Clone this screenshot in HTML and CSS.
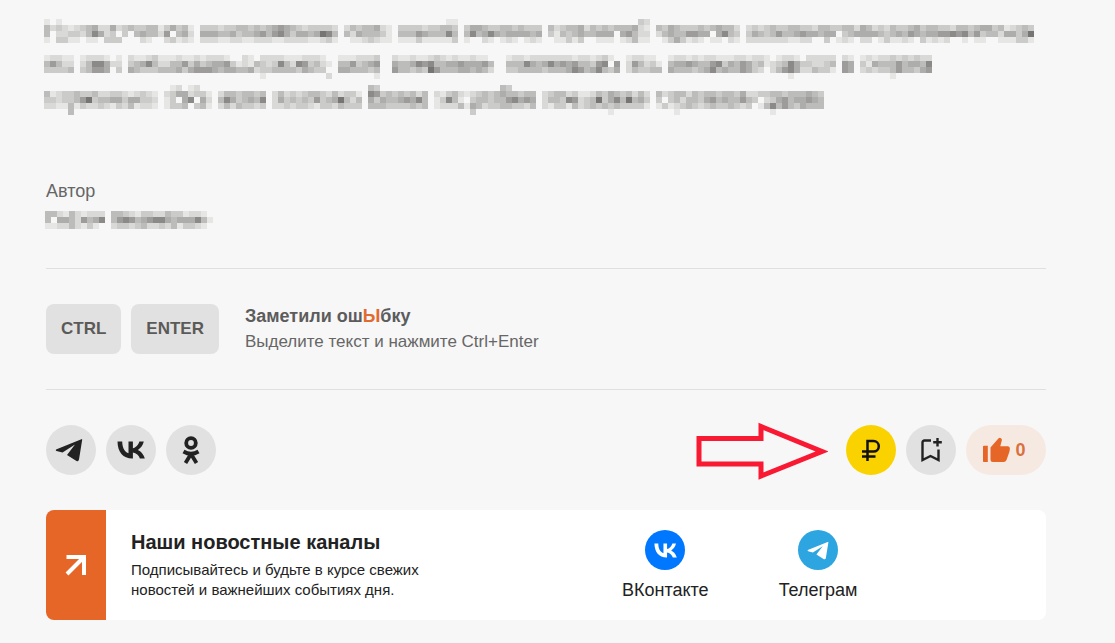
FILE: index.html
```html
<!DOCTYPE html>
<html lang="ru">
<head>
  <meta charset="UTF-8" />
  <meta name="viewport" content="width=device-width, initial-scale=1.0" />
  <title>Новости</title>
  <link rel="stylesheet" href="styles.css">
</head>
<body>
  <svg class="sprite" aria-hidden="true">
    <symbol id="plane" viewBox="0 0 28 24">
      <path d="M27 1 L1 11.5 Q.3 12.7 1.5 13 L7.5 14.5 L20 6.5 L12 17 L21.5 23 Q23.5 24 24 21.5 L27.2 1.8 Z" />
    </symbol>
    <symbol id="vk" viewBox="0 0 28 18">
      <path d="M15.3 17.5 C6 17.5 .7 11.1 .5 .5 H5.2 C5.3 8.3 8.8 11.6 11.5 12.2 V.5 H15.9 V7.2 C18.6 6.9 21.4 3.9 22.4 .5 H26.8 C26.1 4.6 23.1 7.6 20.9 8.9 C23.1 9.9 26.5 12.6 27.8 17.5 H22.9 C21.9 14.3 19.3 11.8 15.9 11.4 V17.5 Z" />
    </symbol>
  </svg>

  <main class="page">
    <div class="redacted" id="article"></div>

    <section class="author">
      <div>Автор</div>
      <div class="redacted" id="author"></div>
    </section>

    <section class="mistake">
      <kbd class="key">CTRL</kbd>
      <kbd class="key">ENTER</kbd>
      <div class="mistake-text">
        <strong>Заметили ош<span class="accent">Ы</span>бку</strong>
        <div>Выделите текст и нажмите Ctrl+Enter</div>
      </div>
    </section>

    <section class="toolbar">
      <button class="round" aria-label="Телеграм">
        <svg class="icon-plane" width="28" height="24"><use href="#plane" /></svg>
      </button>
      <button class="round" aria-label="ВКонтакте">
        <svg class="icon-vk" width="28" height="18"><use href="#vk" /></svg>
      </button>
      <button class="round" aria-label="Одноклассники">
        <svg width="18" height="28" viewBox="0 0 18 28" fill="none" stroke="currentColor" stroke-width="3.8">
          <circle cx="9" cy="7" r="4.8" />
          <path d="M1.5 15.5 Q9 20 16.5 15.5 M9 18 L3.5 27 M9 18 L14.5 27" />
        </svg>
      </button>

      <svg class="pointer" width="132" height="60" viewBox="0 0 132 60">
        <path d="M3 18.5 H65 V6.500 L126 31.500 L65 56 V44 H3 Z" />
      </svg>

      <button class="round round-yellow" aria-label="Поддержать">
        <svg width="20" height="24" viewBox="0 0 20 24" fill="none" stroke="currentColor" stroke-width="2.5">
          <path d="M6.5 23 V3 H12.5 A5.3 5.3 0 0 1 12.5 13.600 H1 M1 18.5 H14.5" />
        </svg>
      </button>
      <button class="round" aria-label="В закладки">
        <svg width="22" height="26" viewBox="0 0 22 26" fill="none" stroke="currentColor" stroke-width="2.4">
          <path d="M11 3.5 H4.5 Q2.5 3.5 2.5 5.5 V23 L10.5 19 L18.5 23 V12.5 M17.5 1 V9.5 M13.2 5.3 H21.8" />
        </svg>
      </button>
      <button class="like">
        <svg width="28" height="26" viewBox="0 0 28 26">
          <path d="M1 9.5 Q1 8.8 1.8 8.8 H5.8 V25 H1.8 Q1 25 1 24.2 Z M8.5 10.5 L16.6 1.3 Q17.8 0 19 1.3 Q20.2 2.2 19.8 3.5 L18.3 9.2 H26 Q28 9.4 27.9 11.5 L27.5 14.5 L24.5 23 Q23.8 25 21.5 25 H11 Q8.5 25 8.5 22.5 Z" />
        </svg>
        <span>0</span>
      </button>
    </section>

    <section class="channels">
      <div class="channels-mark">
        <svg width="22" height="22" viewBox="0 0 22 22">
          <path d="M1.5 3 H19 V21 M18.5 3.5 L2 20" />
        </svg>
      </div>
      <div class="channels-text">
        <h2>Наши новостные каналы</h2>
        <p>Подписывайтесь и будьте в курсе свежих<br />новостей и важнейших событиях дня.</p>
      </div>
      <nav class="channels-links">
        <a href="#">
          <span class="logo logo-vk"><svg width="23" height="15"><use href="#vk" /></svg></span>
          ВКонтакте
        </a>
        <a href="#">
          <span class="logo logo-tg"><svg width="22" height="19"><use href="#plane" /></svg></span>
          Телеграм
        </a>
      </nav>
    </section>
  </main>

  <script src="script.js"></script>
</body>
</html>
```

FILE: styles.css
```css
body {
  margin: 0;
  background-color: #f7f7f7;
  color: #222;
  font-family: "Liberation Sans", Arial, sans-serif;
  font-size: 18px;
}

button {
  border: none;
  padding: 0;
  font-family: inherit;
  cursor: pointer;
}

.sprite {
  position: absolute;
  width: 0;
  height: 0;
}

.page {
  margin: 0 69px 0 46px;
  padding: 19px 0 23px;
}

.redacted {
  margin-left: -2px;
}

.redacted svg {
  display: block;
}

.author {
  margin-top: 64px;
  padding-bottom: 39px;
  border-bottom: 1px solid #e0e0e0;
  color: #666;
  line-height: 24px;
}

.author .redacted {
  margin-top: 8px;
  margin-left: -1px;
}

.mistake {
  display: flex;
  align-items: center;
  gap: 10px;
  padding: 35px 0;
  border-bottom: 1px solid #e0e0e0;
}

.key {
  padding: 0 15px;
  border-radius: 8px;
  background-color: #e1e1e1;
  color: #5c5a58;
  font-family: inherit;
  font-size: 17px;
  font-weight: bold;
  line-height: 50px;
}

.mistake-text {
  margin-left: 16px;
  color: #666;
  font-size: 17px;
  line-height: 25px;
}

.mistake-text strong {
  color: #5c5c5c;
  font-size: 18px;
}

.mistake-text .accent {
  color: #e06a30;
}

.toolbar {
  display: flex;
  align-items: center;
  gap: 10px;
  height: 50px;
  margin: 35px 0;
}

.round {
  display: flex;
  align-items: center;
  justify-content: center;
  width: 50px;
  height: 50px;
  border-radius: 50%;
  background-color: #e1e1e1;
  color: #222;
}

.round-yellow {
  background-color: #f9d200;
  color: #111;
}

.icon-plane,
.icon-vk {
  fill: currentColor;
}

.icon-plane {
  margin-right: 4px;
}

.pointer {
  margin-left: auto;
  margin-right: 8px;
  fill: none;
  stroke: #fa1932;
  stroke-width: 5;
}

.like {
  display: flex;
  align-items: center;
  justify-content: center;
  gap: 5px;
  width: 80px;
  height: 50px;
  padding-right: 4px;
  border-radius: 25px;
  background-color: #f6e9e2;
  color: #d9703f;
  font-size: 18px;
  font-weight: bold;
}

.like svg {
  fill: #e56627;
}

.channels {
  display: flex;
  min-height: 110px;
  border-radius: 8px;
  background-color: #fff;
  overflow: hidden;
}

.channels-mark {
  display: flex;
  flex: 0 0 60px;
  align-items: center;
  justify-content: center;
  background-color: #e56627;
}

.channels-mark path {
  fill: none;
  stroke: #fff;
  stroke-width: 4;
}

.channels-text {
  flex: 0 1 491px;
  padding: 20px 0 0 25px;
}

.channels-text h2 {
  margin: 0 0 6px;
  font-size: 20px;
  line-height: 24px;
}

.channels-text p {
  margin: 0;
  font-size: 15px;
  line-height: 20px;
}

.channels-links {
  display: flex;
  gap: 70px;
  padding-top: 20px;
}

.channels-links a {
  display: flex;
  flex-direction: column;
  align-items: center;
  gap: 8px;
  color: #222;
  line-height: 24px;
  text-decoration: none;
}

.logo {
  display: flex;
  align-items: center;
  justify-content: center;
  width: 40px;
  height: 40px;
  border-radius: 50%;
}

.logo svg {
  fill: #fff;
}

.logo-vk {
  background-color: #0077ff;
}

.logo-tg {
  background-color: #2ca5e0;
}
```

FILE: script.js
```javascript
// Hidden text is drawn as a mosaic: one digit per 6px block, 0 is empty, 8 is darkest.
const BLOCK = 6;
const SHADES = ["", "#e6e6e5", "#d9d9d8", "#cbcbca", "#bcbcbb", "#adadac", "#9d9c9b", "#8b8a88", "#777573"];

// [column, row, rows of digits from top to bottom]
const articleWords = [
  [0, 0, ["101", "4232123452252343344135341", "4022332475230304544260452", "1033110110333000210023121"]],
  [26, 1, ["33323344343456543233332", "55544534456467535545874", "22211221122211222211231"]],
  [50, 1, ["24344521", "42544431", "01123211"]],
  [59, 0, ["0000000011", "3333233443", "4446544474", "1113111113"]],
  [70, 1, ["3554334434333", "4745754555545", "1002101210121"]],
  [84, 0, ["00000000000000032", "42344524343444521", "31434544555056422", "01131300111012411"]],
  [102, 1, ["43543334345442", "24544665505743", "01353121011021"]],
  [117, 1, [
    "232343344332443344254232433453443324434553412343",
    "354346445655455034555543454654556676746344255358",
    "222222211220030121022013112103121200101100111331"
  ]],

  [0, 6, ["12211", "46422", "33334"]],
  [6, 6, ["1222101", "2477522", "3466503"]],
  [14, 6, ["2112311121121222100", "3457422446353455631", "5433344453566654554"]],
  [33, 6, ["210222211122210", "214323742763421", "452334444354330", "000100000000002"]],
  [49, 6, ["1112223", "4463456", "5544434", "0000001"]],
  [58, 6, ["21121123212112110", "54457674455655564", "64434386444554542"]],
  [77, 6, ["1221222222212212310", "4447545756564436706", "3344443444576457435"]],
  [97, 6, ["122110", "264231", "243344"]],
  [104, 6, [
    "1221212211122122101221022222",
    "4556544673546534123475332234",
    "5444345745446532024675224331",
    "0000000000000000000010000000"
  ]],
  [133, 6, ["21", "65", "65"]],
  [136, 6, ["121223232322", "315444645547", "232334644356", "000001000000"]],

  [0, 12, ["4123343342233212321", "3323346834455355332", "2211413223213241221", "0000400000000000000"]],
  [20, 11, ["01201200", "23552331", "13057052", "13340341"]],
  [29, 12, ["24434434", "47534547", "24243323"]],
  [38, 12, ["242323443242331", "253434363458424", "223233213324333"]],
  [54, 11, ["43", "7634343424", "5354456574", "4443333434"]],
  [65, 11, ["00000000000430000", "21342123434544344", "13741034434467565", "12224154233443324", "00000030000000000"]],
  [83, 12, ["234423112435434242", "244376234835748453", "213314234343433331", "000000000001000000"]],
  [102, 12, [
    "4234424344344352233443444543",
    "3034244356454464302356455654",
    "1312343234334323014746435444",
    "0001000000000000000100000000"
  ]]
];

const authorWords = [
  [0, 0, ["4421421222", "4055426457", "1122421310"]],
  [11, 0, ["4432133224331221", "46764567754555741", "2332342232413321"]]
];

function drawMosaic(id, words, columns, rows) {
  const ns = "http://www.w3.org/2000/svg";
  const svg = document.createElementNS(ns, "svg");
  svg.setAttribute("width", columns * BLOCK);
  svg.setAttribute("height", rows * BLOCK);

  words.forEach(([column, row, lines]) => {
    lines.forEach((line, y) => {
      [...line].forEach((shade, x) => {
        if (shade === "0") return;
        const rect = document.createElementNS(ns, "rect");
        rect.setAttribute("x", (column + x) * BLOCK);
        rect.setAttribute("y", (row + y) * BLOCK);
        rect.setAttribute("width", BLOCK);
        rect.setAttribute("height", BLOCK);
        rect.setAttribute("fill", SHADES[shade]);
        svg.appendChild(rect);
      });
    });
  });

  document.getElementById(id).appendChild(svg);
}

drawMosaic("article", articleWords, 165, 16);
drawMosaic("author", authorWords, 28, 3);
```
